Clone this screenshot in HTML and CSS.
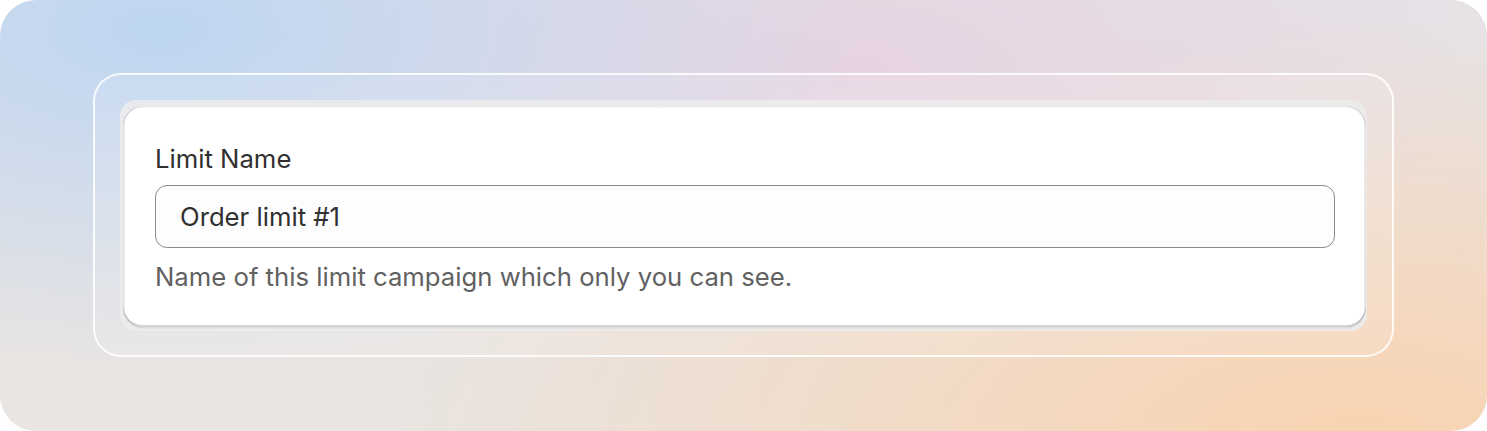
FILE: index.html
```html
<!DOCTYPE html>
<html lang="en">
<head>
    <meta charset="UTF-8">
    <meta name="viewport" content="width=device-width, initial-scale=1.0">
    <title>Limit Name</title>
    <link rel="stylesheet" href="styles.css">
</head>
<body>
    <div class="canvas">
        <div class="frame">
            <div class="panel">
                <div class="card">
                    <label class="label" for="limitName">Limit Name</label>
                    <div class="field">
                        <input id="limitName" class="input" type="text" value="Order limit #1">
                    </div>
                    <p class="help">Name of this limit campaign which only you can see.</p>
                </div>
            </div>
        </div>
    </div>
</body>
</html>
```

FILE: styles.css
```css
body {
    margin: 0;
    background-color: #ffffff;
    font-family: Inter, "Noto Sans", sans-serif;
    color: #303030;
}
.canvas {
    width: 1487px;
    height: 431px;
    box-sizing: border-box;
    padding: 73px 93px;
    border-radius: 36px;
    overflow: hidden;
    background-color: #e9e4e2;
    background-image:
        radial-gradient(ellipse 700px 340px at 160px 30px, rgba(190, 214, 241, 1), rgba(190, 214, 241, 0)),
        radial-gradient(ellipse 620px 260px at 850px 70px, rgba(230, 211, 226, 1), rgba(230, 211, 226, 0)),
        radial-gradient(ellipse 980px 420px at 1360px 440px, rgba(249, 211, 176, 1), rgba(249, 211, 176, 0)),
        linear-gradient(180deg, #e6e2e6 0%, #e9e5e2 100%);
}
.frame {
    height: 284px;
    box-sizing: border-box;
    padding: 25px 25px 24px;
    border: 2px solid rgba(255, 255, 255, 0.85);
    border-radius: 28px;
    background-color: rgba(255, 255, 255, 0.12);
}
.panel {
    height: 231px;
    box-sizing: border-box;
    padding: 6px 1px 4px 3px;
    border-radius: 16px;
    background-color: rgba(236, 236, 236, 0.85);
}
.card {
    height: 100%;
    box-sizing: border-box;
    padding: 37px 31px 0 32px;
    border-radius: 20px;
    background-color: #ffffff;
    box-shadow:
        inset 0 -2px 0 rgba(0, 0, 0, 0.17),
        inset 1.5px 0 0 rgba(0, 0, 0, 0.13),
        inset -1.5px 0 0 rgba(0, 0, 0, 0.13),
        inset 0 1.5px 0 rgba(0, 0, 0, 0.07),
        0 1.5px 0 rgba(26, 26, 26, 0.07);
}
.label {
    display: block;
    font-size: 25.7px;
    line-height: 32px;
    color: #303030;
}
.field {
    margin-top: 10px;
}
.input {
    display: block;
    width: 100%;
    height: 63px;
    box-sizing: border-box;
    padding: 0 24px;
    border: 1px solid #8a8a8a;
    border-radius: 12px;
    background-color: #fdfdfd;
    font-family: Inter, "Noto Sans", sans-serif;
    font-size: 25.7px;
    color: #303030;
    outline: none;
}
.help {
    margin: 13px 0 0;
    font-size: 25.7px;
    line-height: 32px;
    color: #616161;
}
```
